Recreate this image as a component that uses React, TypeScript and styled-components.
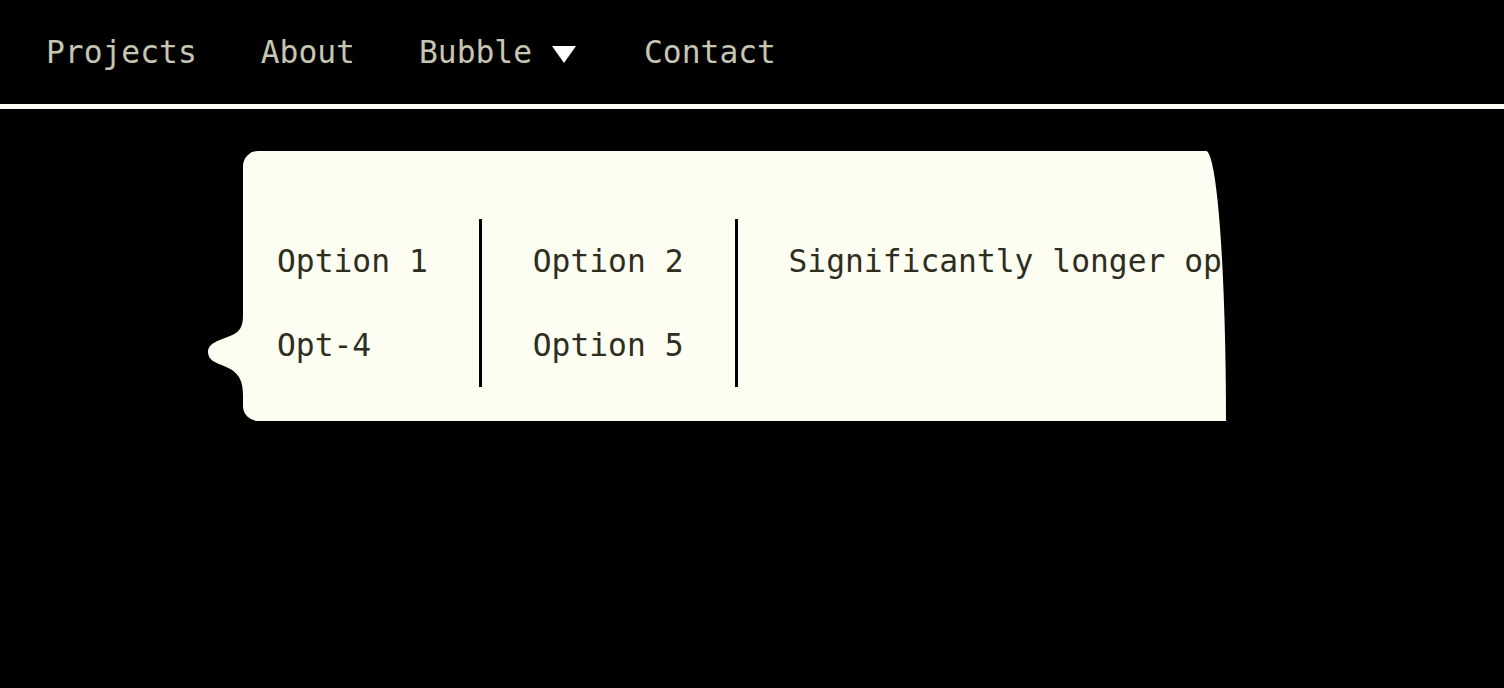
import * as React from 'react';
import styled, { createGlobalStyle } from 'styled-components';

const GlobalStyle = createGlobalStyle`
  html, body {
    margin: 0;
    padding: 0;
    background: #000;
    height: 100%;
  }
  body {
    font-family: "DejaVu Sans Mono", "Liberation Mono", monospace;
    font-size: 31.3px;
  }
`;

const Page = styled.div`
  min-height: 688px;
  background: #000;
`;

const Nav = styled.nav`
  height: 104px;
  display: flex;
  align-items: center;
  gap: 64px;
  padding-left: 46px;
  border-bottom: 5px solid #fdfdf4;
`;

const NavItem = styled.a`
  display: flex;
  align-items: center;
  color: #c6c6b2;
  text-decoration: none;
  white-space: pre;
`;

const Caret = styled.span`
  width: 0;
  height: 0;
  margin-left: 20px;
  margin-right: 4px;
  margin-top: 4px;
  border-left: 12px solid transparent;
  border-right: 12px solid transparent;
  border-top: 17px solid #fff;
`;

const Stage = styled.div`
  padding: 42px 0 0 243px;
`;

const BubbleWrap = styled.div`
  position: relative;
  width: 983px;
`;

const Tail = styled.svg`
  position: absolute;
  left: -43px;
  top: 164px;
  width: 46px;
  height: 84px;
`;

const Bubble = styled.div`
  background: #fdfdf2;
  border-radius: 15px 20px 0 15px / 15px 270px 0 15px;
  overflow: hidden;
  padding: 68px 0 34px 34px;
  display: flex;
  color: #2e2e1e;
`;

const Column = styled.div<{ $first?: boolean; $last?: boolean }>`
  display: flex;
  flex-direction: column;
  flex-shrink: 0;
  padding: ${p => (p.$first ? '0 51px 0 0' : '0 51px')};
  border-right: ${p => (p.$last ? 'none' : '3px solid #000')};
`;

const Option = styled.div`
  height: 84px;
  line-height: 84px;
  white-space: pre;
`;

const columns: string[][] = [
  ['Option 1', 'Opt-4'],
  ['Option 2', 'Option 5'],
  ['Significantly longer option 3'],
];

export default function App() {
  return (
    <Page>
      <GlobalStyle />
      <Nav>
        <NavItem>Projects</NavItem>
        <NavItem>About</NavItem>
        <NavItem>
          Bubble
          <Caret />
        </NavItem>
        <NavItem>Contact</NavItem>
      </Nav>
      <Stage>
        <BubbleWrap>
          <Tail viewBox="0 0 46 84">
            <path
              d="M43,0 C43,12 40,17 30,21 C20,25 8,28 8,37 C8,45 16,48 24,51 C36,56 43,62 43,80 L46,84 L46,0 Z"
              fill="#fdfdf2"
            />
          </Tail>
          <Bubble>
            {columns.map((col, i) => (
              <Column key={i} $first={i === 0} $last={i === columns.length - 1}>
                {col.map(o => (
                  <Option key={o}>{o}</Option>
                ))}
              </Column>
            ))}
          </Bubble>
        </BubbleWrap>
      </Stage>
    </Page>
  );
}
